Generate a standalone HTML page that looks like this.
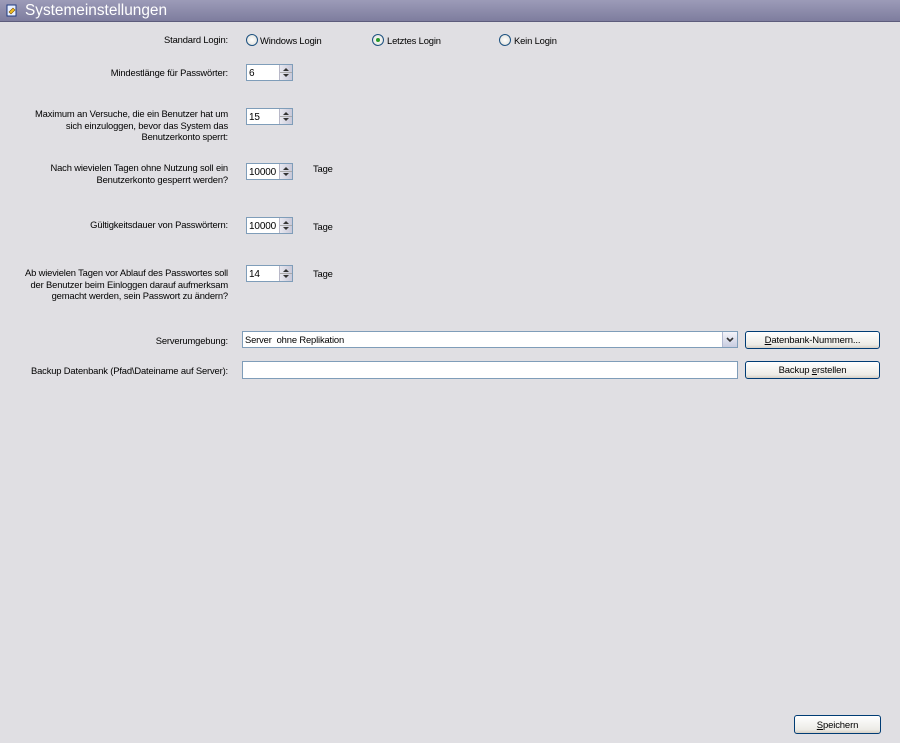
<!DOCTYPE html>
<html><head><meta charset="utf-8"><style>
body{margin:0;width:900px;height:743px;background:#e0dfe3;font-family:"Liberation Sans",sans-serif;font-size:9.4px;color:#000;position:relative;overflow:hidden;letter-spacing:-0.15px}
.a{position:absolute;white-space:nowrap}
.title{position:absolute;left:0;top:0;width:900px;height:21px;background:linear-gradient(#9c9bb8,#7e7d9e);border-bottom:1px solid #5d5c7c;color:#fff;font-size:15.4px;letter-spacing:0}
.lbl{position:absolute;right:672px;text-align:right;line-height:11.5px;white-space:nowrap}
.spin{position:absolute;left:246px;width:45px;height:15px;border:1px solid #7f9db9;background:#fff}
.spin span{position:absolute;left:2px;top:3px;font-size:10px}
.spin i{position:absolute;right:0;top:0;width:12px;height:15px;background:linear-gradient(90deg,#e8e8f0,#c8c8d8);border-left:1px solid #b8b8c8}
.spin i:before{content:"";position:absolute;left:3px;top:3px;border:3px solid transparent;border-top:0;border-bottom:3px solid #333}
.spin i:after{content:"";position:absolute;left:3px;top:9px;border:3px solid transparent;border-bottom:0;border-top:3px solid #333}
.spin b{position:absolute;right:0;top:7px;width:12px;height:1px;background:#aaa}
.radio{position:absolute;width:10px;height:10px;border:1px solid #1c5180;border-radius:50%;background:radial-gradient(#fff,#dcdcd6)}
.btn{position:absolute;border:1px solid #003c74;border-radius:3px;background:linear-gradient(#fff,#ecebe6 80%,#d6d0c5);text-align:center;font-size:9.5px}
.inp{position:absolute;left:242px;width:494px;border:1px solid #7f9db9;background:#fff}
</style></head><body>
<div class="title">
<svg style="position:absolute;left:6px;top:4px" width="12" height="13" viewBox="0 0 12 13"><rect x="1" y="1" width="9" height="11" fill="#e8f0ff" stroke="#203a80"/><path d="M3 8l4-4 2 2-4 4z" fill="#f0c020" stroke="#805000" stroke-width=".6"/></svg>
<span class="a" style="left:25px;top:2px">Systemeinstellungen</span></div>

<div class="lbl" style="top:34px">Standard Login:</div>
<div class="radio" style="left:246px;top:34px"></div><span class="a" style="left:260px;top:35px">Windows Login</span>
<div class="radio" style="left:372px;top:34px"><div style="position:absolute;left:3px;top:3px;width:4px;height:4px;border-radius:50%;background:#2a9a2a"></div></div><span class="a" style="left:387px;top:35px">Letztes Login</span>
<div class="radio" style="left:499px;top:34px"></div><span class="a" style="left:514px;top:35px">Kein Login</span>

<div class="lbl" style="top:67px">Mindestlänge für Passwörter:</div>
<div class="spin" style="top:64px"><span>6</span><i></i><b></b></div>

<div class="lbl" style="top:108px">Maximum an Versuche, die ein Benutzer hat um<br>sich einzuloggen, bevor das System das<br>Benutzerkonto sperrt:</div>
<div class="spin" style="top:108px"><span>15</span><i></i><b></b></div>

<div class="lbl" style="top:162px">Nach wievielen Tagen ohne Nutzung soll ein<br>Benutzerkonto gesperrt werden?</div>
<div class="spin" style="top:163px"><span>10000</span><i></i><b></b></div>
<span class="a" style="left:313px;top:163px">Tage</span>

<div class="lbl" style="top:219px">Gültigkeitsdauer von Passwörtern:</div>
<div class="spin" style="top:217px"><span>10000</span><i></i><b></b></div>
<span class="a" style="left:313px;top:221px">Tage</span>

<div class="lbl" style="top:267px">Ab wievielen Tagen vor Ablauf des Passwortes soll<br>der Benutzer beim Einloggen darauf aufmerksam<br>gemacht werden, sein Passwort zu ändern?</div>
<div class="spin" style="top:265px"><span>14</span><i></i><b></b></div>
<span class="a" style="left:313px;top:268px">Tage</span>

<div class="lbl" style="top:335px">Serverumgebung:</div>
<div class="inp" style="top:331px;height:15px"><span class="a" style="left:2px;top:2px">Server &nbsp;ohne Replikation</span>
<div style="position:absolute;right:0;top:0;width:14px;height:15px;background:linear-gradient(#f4f4fa,#c8cce0);border-left:1px solid #b0b8d0"><svg width="14" height="15"><path d="M4 6l3 3 3-3" fill="none" stroke="#333" stroke-width="1.6"/></svg></div></div>
<div class="btn" style="left:745px;top:331px;width:133px;height:16px;line-height:18px"><u>D</u>atenbank-Nummern...</div>

<div class="lbl" style="top:365px">Backup Datenbank (Pfad\Dateiname auf Server):</div>
<div class="inp" style="top:361px;height:16px"></div>
<div class="btn" style="left:745px;top:361px;width:133px;height:16px;line-height:18px">Backup <u>e</u>rstellen</div>

<div class="btn" style="left:794px;top:715px;width:85px;height:17px;line-height:19px"><u>S</u>peichern</div>
</body></html>
